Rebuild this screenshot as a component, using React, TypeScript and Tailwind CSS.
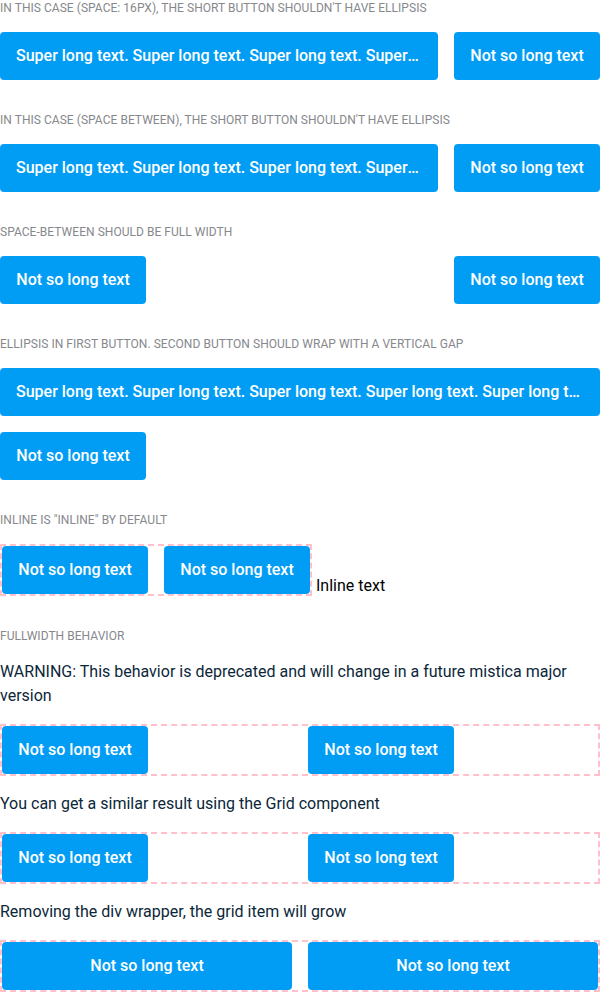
const LONG = "Super long text. Super long text. Super long text. Super long text. Super long text. Super long text.";
const SHORT = "Not so long text";

function Title({ children }: { children: React.ReactNode }) {
  return (
    <h2 className="mb-4 text-[12px] leading-4 uppercase tracking-[0.04px] text-[#86888c] font-normal">
      {children}
    </h2>
  );
}

function Button({ children, className = "" }: { children: React.ReactNode; className?: string }) {
  return (
    <button
      className={`h-12 px-4 rounded bg-[#019df4] text-white text-base font-medium leading-6 whitespace-nowrap overflow-hidden text-ellipsis ${className}`}
    >
      {children}
    </button>
  );
}

export default function App() {
  return (
    <div className="w-[600px] bg-white font-['Roboto',sans-serif]">
      {/* space 16 */}
      <section className="mb-8">
        <Title>In this case (space: 16px), the short button shouldn't have ellipsis</Title>
        <div className="flex gap-4">
          <Button className="min-w-0 text-left">{LONG}</Button>
          <Button className="shrink-0 min-w-[146px]">{SHORT}</Button>
        </div>
      </section>

      {/* space between */}
      <section className="mb-8">
        <Title>In this case (space between), the short button shouldn't have ellipsis</Title>
        <div className="flex justify-between gap-4">
          <Button className="min-w-0 text-left">{LONG}</Button>
          <Button className="shrink-0 min-w-[146px]">{SHORT}</Button>
        </div>
      </section>

      <section className="mb-8">
        <Title>Space-between should be full width</Title>
        <div className="flex w-full justify-between">
          <Button className="min-w-[146px]">{SHORT}</Button>
          <Button className="min-w-[146px]">{SHORT}</Button>
        </div>
      </section>

      <section className="mb-8">
        <Title>Ellipsis in first button. Second button should wrap with a vertical gap</Title>
        <div className="flex flex-wrap gap-4">
          <Button className="max-w-full text-left">{LONG}</Button>
          <Button className="min-w-[146px]">{SHORT}</Button>
        </div>
      </section>

      <section className="mb-8">
        <Title>Inline is "inline" by default</Title>
        <div className="flex items-end">
          <div className="flex gap-4 border-2 border-dashed border-[#ffc0cb]">
            <Button className="min-w-[146px]">{SHORT}</Button>
            <Button className="min-w-[146px]">{SHORT}</Button>
          </div>
          <span className="ml-[4px] mb-[-2px] text-base leading-6 text-black">Inline text</span>
        </div>
      </section>

      <section>
        <Title>Fullwidth behavior</Title>
        <p className="mt-4 mb-4 text-base leading-6 text-[#0b2739]">
          WARNING: This behavior is deprecated and will change in a future mistica major version
        </p>
        <div className="grid grid-cols-2 gap-4 border-2 border-dashed border-[#ffc0cb]">
          <div>
            <Button className="min-w-[146px]">{SHORT}</Button>
          </div>
          <div>
            <Button className="min-w-[146px]">{SHORT}</Button>
          </div>
        </div>
        <p className="my-4 text-base leading-6 text-[#0b2739]">
          You can get a similar result using the Grid component
        </p>
        <div className="grid grid-cols-2 gap-4 border-2 border-dashed border-[#ffc0cb]">
          <div>
            <Button className="min-w-[146px]">{SHORT}</Button>
          </div>
          <div>
            <Button className="min-w-[146px]">{SHORT}</Button>
          </div>
        </div>
        <p className="my-4 text-base leading-6 text-[#0b2739]">
          Removing the div wrapper, the grid item will grow
        </p>
        <div className="grid grid-cols-2 gap-4 border-2 border-dashed border-[#ffc0cb]">
          <Button>{SHORT}</Button>
          <Button>{SHORT}</Button>
        </div>
      </section>
    </div>
  );
}
